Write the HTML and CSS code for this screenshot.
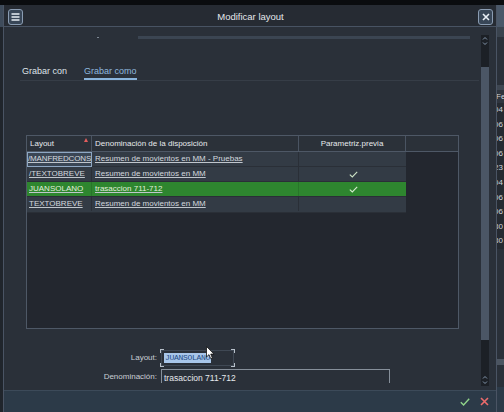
FILE: index.html
```html
<!DOCTYPE html>
<html lang="es">
<head>
<meta charset="utf-8">
<title>Modificar layout</title>
<link rel="stylesheet" href="styles.css">
</head>
<body>
<div class="topbar"></div>
<div class="main">
  <div class="lstrip"><div class="ls-top"></div><div class="ls-rest"></div></div>
  <div class="dialog">
    <div class="dhead">
      <div class="hbtn">
        <svg width="9" height="8" viewBox="0 0 9 8"><path d="M0.5 1H8.5M0.5 4H8.5M0.5 7H8.5" stroke="#e8eef5" stroke-width="1.3"/></svg>
      </div>
      <div class="title">Modificar layout</div>
      <div class="hbtn">
        <svg width="8" height="8" viewBox="0 0 8 8"><path d="M1 1L7 7M7 1L1 7" stroke="#e8eef5" stroke-width="1.6"/></svg>
      </div>
    </div>
    <div class="dbody">
      <div class="content">
        <div class="cutrow"><span class="dot"></span><div class="cutbar"></div></div>
        <div class="tabs">
          <div class="tab">Grabar con</div>
          <div class="tab active">Grabar como</div>
        </div>
        <div class="grid">
          <div class="ghead">
            <div class="hc c1"><span>Layout</span><span class="sort"></span></div>
            <div class="hc c2">Denominación de la disposición</div>
            <div class="hc c3">Parametriz.previa</div>
            <div class="hc c4"></div>
          </div>
          <div class="row">
            <div class="cell c1 focus"><span class="lnk tight">/MANFREDCONS</span></div>
            <div class="cell c2"><span class="lnk">Resumen de movientos en MM - Pruebas</span></div>
            <div class="cell c3"></div>
          </div>
          <div class="row">
            <div class="cell c1"><span class="lnk">/TEXTOBREVE</span></div>
            <div class="cell c2"><span class="lnk">Resumen de movientos en MM</span></div>
            <div class="cell c3"><svg class="chk" width="9" height="7" viewBox="0 0 9 7"><path d="M0.8 3.6L3.3 6L8.2 0.8" fill="none" stroke="#cde3c6" stroke-width="1.1"/></svg></div>
          </div>
          <div class="row sel">
            <div class="cell c1"><span class="lnk">JUANSOLANO</span></div>
            <div class="cell c2"><span class="lnk">trasaccion 711-712</span></div>
            <div class="cell c3"><svg class="chk" width="9" height="7" viewBox="0 0 9 7"><path d="M0.8 3.6L3.3 6L8.2 0.8" fill="none" stroke="#d6ecd0" stroke-width="1.1"/></svg></div>
          </div>
          <div class="row">
            <div class="cell c1"><span class="lnk">TEXTOBREVE</span></div>
            <div class="cell c2"><span class="lnk">Resumen de movientos en MM</span></div>
            <div class="cell c3"></div>
          </div>
        </div>
        <div class="form">
          <div class="frow">
            <div class="lbl">Layout:</div>
            <div class="inp inp-layout">
              <span class="seltext">JUANSOLANO</span>
              <span class="cn tl"></span><span class="cn tr"></span><span class="cn bl"></span><span class="cn br"></span>
            </div>
          </div>
          <div class="frow">
            <div class="lbl">Denominación:</div>
            <div class="inp inp-den">trasaccion 711-712</div>
          </div>
        </div>
      </div>
      <div class="vscroll">
        <div class="arrows">
          <svg width="6" height="10" viewBox="0 0 6 10"><path d="M1 3.5L3 1.5L5 3.5M1 6.5L3 8.5L5 6.5" fill="none" stroke="#8fa3ba" stroke-width="0.9"/></svg>
        </div>
        <div class="gap1"></div>
        <div class="thumb"></div>
        <div class="gap2"></div>
        <div class="arrows">
          <svg width="6" height="10" viewBox="0 0 6 10"><path d="M1 3.5L3 1.5L5 3.5M1 6.5L3 8.5L5 6.5" fill="none" stroke="#8fa3ba" stroke-width="0.9"/></svg>
        </div>
      </div>
    </div>
    <div class="dfoot">
      <svg width="10" height="8" viewBox="0 0 10 8"><path d="M0.8 4.2L3.6 7L9.2 0.8" fill="none" stroke="#90d48a" stroke-width="1.4"/></svg>
      <svg width="9" height="9" viewBox="0 0 9 9"><path d="M1 1L8 8M8 1L1 8" stroke="#ec6b6b" stroke-width="1.6"/></svg>
    </div>
  </div>
  <div class="rstrip">
    <div class="rb b1"></div>
    <div class="rb b2"></div>
    <div class="rb b3"></div>
    <div class="rb b4"></div>
    <div class="rhead">Fe</div>
    <div class="rrows">
      <div>04</div><div>06</div><div>06</div><div>06</div><div>23</div><div>04</div><div>06</div><div>06</div><div>30</div><div>30</div>
    </div>
    <div class="rb b5"></div>
    <div class="rb b6"></div>
    <div class="rb b7"></div>
    <div class="rb b8"></div>
  </div>
</div>
<svg class="cursor" width="9" height="14" viewBox="0 0 9 14"><path d="M0.5 0.5L0.5 11L3 8.6L4.8 12.8L6.4 12.1L4.7 8.1L8 8.1Z" fill="#ffffff" stroke="#111" stroke-width="0.8"/></svg>
</body>
</html>
```

FILE: styles.css
```css
* { box-sizing: border-box; }
html, body { margin: 0; padding: 0; }
body {
  width: 504px;
  height: 412px;
  overflow: hidden;
  background: #1e2329;
  font-family: "Liberation Sans", Arial, sans-serif;
  color: #dde2e8;
  position: relative;
}
.topbar { height: 5px; background: #0a0c0f; }
.main { display: flex; height: 407px; }

.lstrip { width: 3px; display: flex; flex-direction: column; }
.ls-top { height: 22px; background: #3e4b5b; }
.ls-rest { flex: 1; background: #20252c; }

.dialog {
  width: 494px;
  display: flex;
  flex-direction: column;
  background: #2a3039;
  border-left: 1px solid #4a5464;
  border-right: 1px solid #4a5464;
}
.dhead {
  height: 22px;
  display: flex;
  align-items: center;
  padding: 0 3px 0 4px;
  background: #262b33;
  border-bottom: 1px solid #485363;
}
.hbtn {
  width: 15px;
  height: 16px;
  border: 1px solid #8a9cb2;
  border-radius: 3px;
  background: #384657;
  display: flex;
  align-items: center;
  justify-content: center;
  margin-top: 2px;
}
.title {
  flex: 1;
  text-align: center;
  font-size: 9.5px;
  color: #e4e7eb;
  padding-top: 1px;
}

.dbody { height: 363px; display: flex; }
.content {
  width: 477px;
  height: 356px;
  overflow: hidden;
}
.cutrow { display: flex; align-items: center; padding-top: 9px; height: 12px; }
.dot { width: 2px; height: 1px; background: #7d8793; margin-left: 93px; }
.cutbar { width: 332px; height: 3px; background: #3b4552; margin-left: 39px; }

.tabs {
  margin-top: 25px;
  margin-left: 16px;
  width: 459px;
  padding-left: 2px;
  display: flex;
  gap: 17px;
  border-bottom: 1px solid #363d47;
}
.tab {
  height: 16px;
  line-height: 14px;
  font-size: 9px;
  color: #dfe3e8;
  border-bottom: 2px solid transparent;
}
.tab.active { color: #8fb8de; border-bottom-color: #8ab4dc; }

.grid {
  margin-top: 54px;
  margin-left: 22px;
  width: 433px;
  height: 194px;
  border: 1px solid #4e5866;
  background: #23272f;
  font-size: 8px;
}
.ghead {
  display: flex;
  height: 16px;
  background: #2b3139;
  border-bottom: 1px solid #4e5866;
}
.hc {
  height: 15px;
  line-height: 15px;
  padding-left: 3px;
  border-right: 1px solid #4a5462;
  color: #e6e9ec;
  white-space: nowrap;
}
.hc.c3 { text-align: center; padding-left: 0; }
.hc.c4 { border-right: none; }
.c1 { width: 65px; }
.c2 { width: 207px; }
.c3 { width: 107px; }
.c4 { width: 52px; }
.hc.c1 { display: flex; justify-content: space-between; padding-right: 3px; }
.sort {
  width: 0;
  height: 0;
  margin-top: 2px;
  border-left: 2px solid transparent;
  border-right: 2px solid transparent;
  border-bottom: 4px solid #e35d5d;
}
.row {
  display: flex;
  width: 379px;
  height: 15px;
  background: #333b45;
  border-bottom: 1px solid #2a2f37;
}
.row:last-child { height: 16px; }
.row.sel { background: #2e862f; }
.cell {
  height: 14px;
  line-height: 13px;
  padding-left: 2px;
  border-right: 1px solid #2a2f37;
  white-space: nowrap;
  overflow: hidden;
}
.row.sel .cell { border-right-color: #28752a; }
.cell.c2 { padding-left: 3px; }
.cell.c3 { display: flex; align-items: center; justify-content: center; border-right: none; }
.cell.focus { border: 1px solid #8ea7c3; background: #3a4655; padding-left: 0; line-height: 12px; height: 15px; }
.lnk { color: #d4d9df; text-decoration: underline; text-decoration-color: #c0c6cd; }
.lnk.tight { letter-spacing: -0.15px; }
.row.sel .lnk { color: #e2f0dc; }

.form { margin-top: 21px; display: flex; flex-direction: column; gap: 3px; }
.frow { display: flex; align-items: flex-start; gap: 4px; }
.lbl {
  width: 153px;
  text-align: right;
  font-size: 8px;
  color: #c9ced4;
  line-height: 16px;
}
.inp {
  position: relative;
  font-size: 8px;
  color: #e6e9ed;
}
.inp-layout {
  width: 73px;
  height: 16px;
  border: 1px solid #3f4854;
  padding: 2px 0 0 2px;
}
.seltext {
  display: inline-block;
  background: #a8c6ea;
  color: #1f4c86;
  font-family: "Liberation Mono", "Courier New", monospace;
  font-size: 8px;
  line-height: 10px;
  height: 10px;
  padding: 0 1px;
  letter-spacing: -0.3px;
}
.cn { position: absolute; width: 4px; height: 4px; border-color: #b7c0ca; border-style: solid; border-width: 0; }
.cn.tl { left: -2px; top: -2px; border-left-width: 1px; border-top-width: 1px; }
.cn.tr { right: -2px; top: -2px; border-right-width: 1px; border-top-width: 1px; }
.cn.bl { left: -2px; bottom: -2px; border-left-width: 1px; border-bottom-width: 1px; }
.cn.br { right: -2px; bottom: -2px; border-right-width: 1px; border-bottom-width: 1px; }
.inp-den {
  width: 229px;
  height: 22px;
  border: 1px solid #868f9a;
  padding: 2px 0 0 2px;
  line-height: 12px;
  font-size: 8.5px;
}

.vscroll {
  width: 8px;
  margin-top: 8px;
  height: 351px;
  background: #1c2026;
  display: flex;
  flex-direction: column;
}
.arrows { height: 12px; display: flex; align-items: center; justify-content: center; }
.gap1 { height: 20px; }
.thumb { height: 273px; background: #4b5665; }
.gap2 { flex: 1; }

.dfoot {
  flex: 1;
  background: #2c3a48;
  border-top: 1px solid #3c4a59;
  display: flex;
  justify-content: flex-end;
  align-items: center;
  gap: 10px;
  padding-right: 7px;
}

.rstrip {
  width: 7px;
  display: flex;
  flex-direction: column;
  overflow: hidden;
  font-size: 8px;
  color: #cfd5dc;
}
.rb { flex-shrink: 0; }
.b1 { height: 22px; background: #4a5869; }
.b2 { height: 10px; background: #3a434e; }
.b3 { height: 48px; background: #2a3039; }
.b4 { height: 5px; background: #3e4651; }
.rhead { height: 13px; line-height: 13px; background: #2f353e; white-space: nowrap; margin-left: -1px; }
.rrows { background: #252a31; }
.rrows div { height: 14.6px; line-height: 14.6px; white-space: nowrap; margin-left: -3px; }
.b5 { height: 110px; background: #2a3039; }
.b6 { height: 6px; background: #4c5561; }
.b7 { height: 22px; background: #2a3039; }
.b8 { flex: 1; background: #2c3a48; }

.cursor { position: absolute; left: 206px; top: 346px; }
```
